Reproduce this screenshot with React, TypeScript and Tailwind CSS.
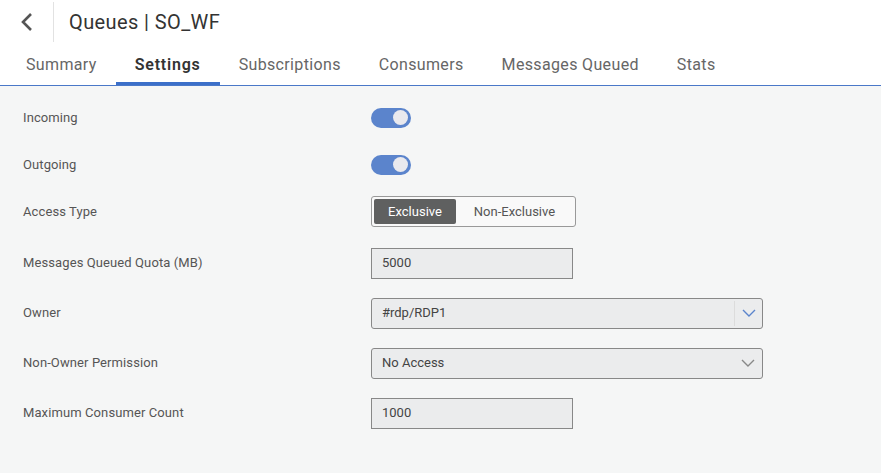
import React, { useState } from 'react';

const tabs = ['Summary', 'Settings', 'Subscriptions', 'Consumers', 'Messages Queued', 'Stats'];

const Toggle: React.FC<{ on: boolean }> = ({ on }) => (
  <div className={`w-10 h-5 rounded-full flex items-center px-[3px] ${on ? 'bg-[#5b84cc] justify-end' : 'bg-gray-300 justify-start'}`}>
    <div className="w-[15px] h-[15px] rounded-full bg-[#e9e9ee]" />
  </div>
);

const Chevron: React.FC<{ color: string }> = ({ color }) => (
  <svg width="14" height="8" viewBox="0 0 14 8" fill="none">
    <path d="M1 1l6 6 6-6" stroke={color} strokeWidth="1.4" />
  </svg>
);

const Row: React.FC<{ label: string; children: React.ReactNode }> = ({ label, children }) => (
  <div className="flex items-center h-[50px]">
    <div className="w-[348px] text-[13px] text-[#555] tracking-[0.1px]">{label}</div>
    {children}
  </div>
);

export default function App() {
  const [active, setActive] = useState('Settings');
  const [access, setAccess] = useState('Exclusive');

  return (
    <div className="w-[881px] h-[473px] bg-[#f5f6f6] font-['Roboto',sans-serif] text-[#333]">
      {/* Entête */}
      <div className="bg-white">
        <div className="flex items-center h-[43px]">
          <div className="w-[54px] h-[40px] flex items-center justify-center border-r border-[#e2e2e2]">
            <svg width="14" height="20" viewBox="0 0 14 20" fill="none">
              <path d="M11 2L3 10l8 8" stroke="#555" strokeWidth="2.6" />
            </svg>
          </div>
          <h1 className="ml-[15px] text-[20px] tracking-[0.4px] text-[#333]">Queues | SO_WF</h1>
        </div>
        <nav className="flex pl-[7px] border-b border-[#4a78c8] h-[43px]">
          {tabs.map((tab) => (
            <button
              key={tab}
              onClick={() => setActive(tab)}
              className={`px-[19px] pt-[4px] h-full border-b-[3px] text-[16px] ${
                active === tab
                  ? 'border-[#3b6fc9] font-semibold text-[#333] tracking-[0.8px]'
                  : 'border-transparent text-[#666] tracking-[0.35px]'
              }`}
            >
              {tab}
            </button>
          ))}
        </nav>
      </div>

      {/* Réglages */}
      <div className="pl-[23px] pt-[8px]">
        <div className="flex flex-col">
          <div className="h-[47px] flex items-center">
            <div className="w-[348px] text-[13px] text-[#555] tracking-[0.1px]">Incoming</div>
            <Toggle on />
          </div>
          <div className="h-[47px] flex items-center">
            <div className="w-[348px] text-[13px] text-[#555] tracking-[0.1px]">Outgoing</div>
            <Toggle on />
          </div>
          <div className="h-[47px] flex items-center">
            <div className="w-[348px] text-[13px] text-[#555] tracking-[0.1px]">Access Type</div>
            <div className="flex h-[31px] w-[205px] p-[2px] border border-[#999] rounded-[3px] bg-white/40">
              {['Exclusive', 'Non-Exclusive'].map((a) => (
                <button
                  key={a}
                  onClick={() => setAccess(a)}
                  className={`h-full rounded-[2px] text-[13px] ${
                    access === a ? 'bg-[#5f6060] text-white w-[82px]' : 'text-[#555] flex-1'
                  }`}
                >
                  {a}
                </button>
              ))}
            </div>
          </div>
        </div>
        <div className="mt-[3px]">
          <Row label="Messages Queued Quota (MB)">
            <div className="w-[202px] h-[31px] border border-[#888] bg-[#ebeced] flex items-center pl-[10px] text-[13px] text-[#444]">5000</div>
          </Row>
          <Row label="Owner">
            <div className="w-[392px] h-[31px] border border-[#888] rounded-[3px] bg-[#ebeced] flex items-center text-[13px] text-[#444]">
              <span className="flex-1 pl-[10px]">#rdp/RDP1</span>
              <div className="h-[25px] border-l border-[#dcdcdc] w-[28px] flex items-center justify-center">
                <Chevron color="#5b84cc" />
              </div>
            </div>
          </Row>
          <Row label="Non-Owner Permission">
            <div className="w-[392px] h-[31px] border border-[#888] rounded-[3px] bg-[#ebeced] flex items-center text-[13px] text-[#444]">
              <span className="flex-1 pl-[10px]">No Access</span>
              <div className="w-[28px] flex items-center justify-center">
                <Chevron color="#888" />
              </div>
            </div>
          </Row>
          <Row label="Maximum Consumer Count">
            <div className="w-[202px] h-[31px] border border-[#888] bg-[#ebeced] flex items-center pl-[10px] text-[13px] text-[#444]">1000</div>
          </Row>
        </div>
      </div>
    </div>
  );
}
